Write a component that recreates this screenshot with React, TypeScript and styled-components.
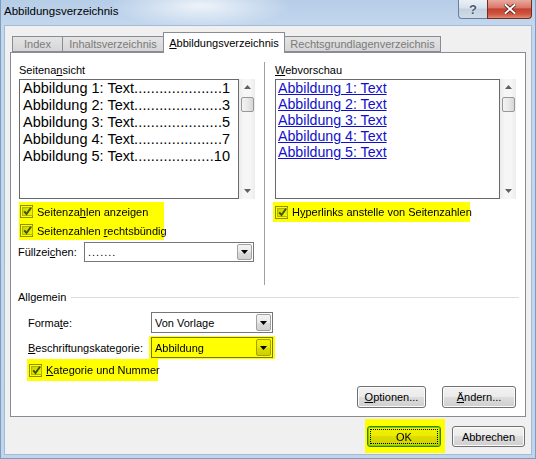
import React from 'react';
import styled, { createGlobalStyle } from 'styled-components';

const GlobalStyle = createGlobalStyle`
  html, body {
    margin: 0;
    padding: 0;
    background: #ffffff;
  }
  body {
    font-family: "Liberation Sans", Arial, sans-serif;
    font-size: 11px;
    color: #000;
  }
`;

const Window = styled.div`
  width: 536px;
  height: 459px;
  box-sizing: border-box;
  display: flex;
  flex-direction: column;
  border: 1px solid #7e9cbd;
  border-top: none;
  background:
    radial-gradient(ellipse 90px 22px at 200px 6px, rgba(255, 255, 255, 0.75), rgba(255, 255, 255, 0) 100%),
    linear-gradient(180deg, #b6cde7 0px, #c3d7ee 25px, #c0d5ec 100%);
`;

const TitleBar = styled.div`
  height: 25px;
  display: flex;
  align-items: flex-start;
`;

const TitleText = styled.div`
  padding: 4px 0 0 3px;
  line-height: 14px;
  font-size: 11.5px;
  color: #000;
`;

const WindowButtons = styled.div`
  margin-left: auto;
  margin-right: 3px;
  display: flex;
`;

const HelpButton = styled.div`
  width: 29px;
  height: 19px;
  box-sizing: border-box;
  border: 1px solid #6b7f99;
  border-top: none;
  border-right: none;
  border-bottom-left-radius: 4px;
  background: linear-gradient(180deg, #eaf0f6 0%, #d7e1ec 45%, #c3d0df 50%, #cfdbe8 100%);
  display: flex;
  align-items: center;
  justify-content: center;
  font-weight: bold;
  font-size: 13px;
  color: #4a5a70;
  text-shadow: 0 0 2px #fff;
`;

const CloseButton = styled.div`
  width: 45px;
  height: 19px;
  box-sizing: border-box;
  border: 1px solid #6f2b24;
  border-top: none;
  border-bottom-right-radius: 4px;
  background: linear-gradient(180deg, #e9aa9e 0%, #d9786b 42%, #c5412f 50%, #cf5440 78%, #e28b72 100%);
  display: flex;
  align-items: center;
  justify-content: center;
`;

const Client = styled.div`
  flex: 1;
  margin: 0 3px 3px;
  border: 1px solid #a5bad3;
  background: #f0f0f0;
  padding: 6px 5px 0;
  display: flex;
  flex-direction: column;
`;

const TabStrip = styled.div`
  display: flex;
  align-items: flex-end;
  height: 20px;
  padding-left: 2px;
`;

const Tab = styled.div<{ $active?: boolean; $w: number }>`
  position: relative;
  width: ${p => p.$w}px;
  height: ${p => (p.$active ? 21 : 16)}px;
  margin-bottom: ${p => (p.$active ? -1 : 0)}px;
  margin-left: -1px;
  &:first-child {
    margin-left: 0;
  }
  box-sizing: border-box;
  border: 1px solid #898c95;
  border-bottom: ${p => (p.$active ? 'none' : '1px solid #898c95')};
  background: ${p => (p.$active ? '#ffffff' : 'linear-gradient(180deg, #e4e4e4 0%, #d6d6d6 100%)')};
  color: ${p => (p.$active ? '#000' : '#7a7a7a')};
  z-index: ${p => (p.$active ? 1 : 0)};
  text-align: center;
  line-height: ${p => (p.$active ? 20 : 15)}px;
  white-space: nowrap;
`;

const Panel = styled.div`
  height: 365px;
  box-sizing: border-box;
  border: 1px solid #898c95;
  background: #ffffff;
  padding: 9px 9px 0 8px;
  display: flex;
  flex-direction: column;
`;

const TopSection = styled.div`
  display: flex;
  height: 223px;
`;

const Column = styled.div<{ $w?: number }>`
  display: flex;
  flex-direction: column;
  align-items: flex-start;
  ${p => (p.$w ? `width: ${p.$w}px;` : 'flex: 1;')}
`;

const Separator = styled.div`
  width: 1px;
  background: #a0a0a0;
  margin: 0 10px 0 9px;
`;

const Label = styled.div`
  line-height: 14px;
  margin-top: 1px;
`;

const ListFrame = styled.div`
  display: flex;
  align-self: stretch;
  height: 120px;
  margin-top: 2px;
`;

const ListArea = styled.div<{ $lh: number; $fs: number; $pad: string }>`
  flex: 1;
  min-width: 0;
  border: 1px solid #6a6a6a;
  background: #fff;
  padding: ${p => p.$pad};
  font-family: "Liberation Sans", Arial, sans-serif;
  font-size: ${p => p.$fs}px;
  line-height: ${p => p.$lh}px;
`;

const EntryRow = styled.div`
  display: flex;
  white-space: nowrap;
`;

const Leader = styled.span`
  flex: 1;
  min-width: 0;
  overflow: hidden;
  white-space: nowrap;
  text-align: right;
  letter-spacing: 0.17px;
`;

const LinkRow = styled.div`
  color: #1010cc;
  text-decoration: underline;
  white-space: nowrap;
`;

const ScrollBar = styled.div`
  width: 16px;
  display: flex;
  flex-direction: column;
  align-items: center;
  background: linear-gradient(90deg, #ebebeb 0%, #f6f6f6 30%, #f6f6f6 70%, #ececec 100%);
`;

const ScrollArrow = styled.div`
  height: 16px;
  display: flex;
  align-items: center;
  justify-content: center;
`;

const ScrollThumb = styled.div`
  width: 13px;
  height: 15px;
  margin-top: 2px;
  box-sizing: border-box;
  border: 1px solid #979797;
  border-radius: 2px;
  background: linear-gradient(90deg, #f3f3f3 0%, #e9e9e9 50%, #d6d6d6 100%);
`;

const ScrollSpacer = styled.div`
  flex: 1;
`;

const Highlight = styled.div<{ $w?: number }>`
  isolation: isolate;
  background: #ffff00;
  ${p => (p.$w ? `width: ${p.$w}px;` : '')}
  box-sizing: border-box;
  & > * {
    mix-blend-mode: multiply;
  }
`;

const CheckRow = styled.div<{ $h: number }>`
  display: flex;
  align-items: center;
  height: ${p => p.$h}px;
  gap: 4px;
  white-space: nowrap;
`;

const CheckBox = styled.span`
  width: 13px;
  height: 13px;
  box-sizing: border-box;
  flex: none;
  border: 1px solid #8e8f8f;
  background: #fff;
  padding: 1px;
  display: flex;
`;

const CheckInner = styled.span`
  flex: 1;
  border: 1px solid #b0b4ba;
  background: linear-gradient(135deg, #ccd0d6 0%, #f5f5f5 100%);
  display: flex;
  align-items: center;
  justify-content: center;
`;

const FillRow = styled.div`
  display: flex;
  align-items: center;
  margin-top: 2px;
  margin-left: -1px;
`;

const InlineLabel = styled.div<{ $w: number }>`
  width: ${p => p.$w}px;
  flex: none;
  white-space: nowrap;
`;

const Combo = styled.div<{ $w: number; $h: number }>`
  display: flex;
  width: ${p => p.$w}px;
  height: ${p => p.$h}px;
  box-sizing: border-box;
  border: 1px solid #767676;
  background: #fff;
`;

const ComboValue = styled.div<{ $spacing?: number }>`
  flex: 1;
  display: flex;
  align-items: center;
  padding-left: 3px;
  white-space: nowrap;
  letter-spacing: ${p => p.$spacing ?? 0}px;
`;

const ComboButton = styled.div`
  width: 15px;
  margin: 1px;
  box-sizing: border-box;
  border: 1px solid #a2a2a2;
  border-radius: 2px;
  background: linear-gradient(180deg, #f4f4f4 0%, #e9e9e9 50%, #dcdcdc 51%, #d0d0d0 100%);
  display: flex;
  align-items: center;
  justify-content: center;
`;

const GroupHeader = styled.div`
  display: flex;
  align-items: center;
  gap: 5px;
  margin-top: 5px;
  margin-left: -1px;
  margin-right: -3px;
  line-height: 14px;
`;

const GroupLine = styled.div`
  flex: 1;
  height: 1px;
  background: #d8dde2;
`;

const FieldRow = styled.div<{ $mt: number }>`
  display: flex;
  align-items: center;
  padding-left: 9px;
  margin-top: ${p => p.$mt}px;
`;

const ComboHighlight = styled(Highlight)`
  padding: 1px 2px;
  margin-left: -2px;
`;

const CategoryHighlight = styled(Highlight)`
  margin-left: 8px;
  padding-left: 2px;
`;

const ButtonRow = styled.div`
  display: flex;
  justify-content: flex-end;
  gap: 16px;
  margin-top: 5px;
`;

const Button = styled.button<{ $w: number; $h: number; $default?: boolean }>`
  width: ${p => p.$w}px;
  height: ${p => p.$h}px;
  box-sizing: border-box;
  padding: 0;
  font: inherit;
  color: #000;
  border: 1px solid ${p => (p.$default ? '#3c7fb1' : '#707070')};
  border-radius: 3px;
  background: linear-gradient(180deg, #f2f2f2 0%, #ebebeb 49%, #dddddd 50%, #cfcfcf 100%);
  box-shadow: inset 0 0 0 1px ${p => (p.$default ? '#6ad4f5' : '#fbfbfb')};
  ${p => (p.$default ? 'outline: 1px dotted #000; outline-offset: -4px;' : '')}
`;

const Footer = styled.div`
  display: flex;
  justify-content: flex-end;
  align-items: flex-start;
  padding: 2px 1px 0 0;
`;

const OkHighlight = styled(Highlight)`
  padding: 7px 4px 6px 2px;
`;

const CancelButton = styled(Button)`
  margin: 7px 0 0 7px;
`;

const Check = () => (
  <CheckBox>
    <CheckInner>
      <svg width="9" height="9" viewBox="0 0 9 9" style={{ overflow: 'visible' }}>
        <path d="M1.2 4.4 L3.5 7 L8 0.8" fill="none" stroke="#3c5598" strokeWidth="1.9" />
      </svg>
    </CheckInner>
  </CheckBox>
);

const DropArrow = () => (
  <svg width="7" height="4" viewBox="0 0 7 4">
    <path d="M0 0 H7 L3.5 4 Z" fill="#000" />
  </svg>
);

const Scroller = () => (
  <ScrollBar>
    <ScrollArrow>
      <svg width="7" height="4" viewBox="0 0 7 4">
        <path d="M0 4 H7 L3.5 0 Z" fill="#606060" />
      </svg>
    </ScrollArrow>
    <ScrollThumb />
    <ScrollSpacer />
    <ScrollArrow>
      <svg width="7" height="4" viewBox="0 0 7 4">
        <path d="M0 0 H7 L3.5 4 Z" fill="#606060" />
      </svg>
    </ScrollArrow>
  </ScrollBar>
);

const entries = [
  { label: 'Abbildung 1: Text', page: '1', dots: 21 },
  { label: 'Abbildung 2: Text', page: '3', dots: 21 },
  { label: 'Abbildung 3: Text', page: '5', dots: 21 },
  { label: 'Abbildung 4: Text', page: '7', dots: 21 },
  { label: 'Abbildung 5: Text', page: '10', dots: 19 },
];

const tabs = [
  { label: 'Index', w: 51 },
  { label: 'Inhaltsverzeichnis', w: 102 },
  { label: 'Abbildungsverzeichnis', w: 122, active: true },
  { label: 'Rechtsgrundlagenverzeichnis', w: 157 },
];

const App: React.FC = () => {
  return (
    <>
      <GlobalStyle />
      <Window>
        <TitleBar>
          <TitleText>Abbildungsverzeichnis</TitleText>
          <WindowButtons>
            <HelpButton>?</HelpButton>
            <CloseButton>
              <svg width="12" height="10" viewBox="0 0 12 10">
                <path d="M1.5 1 L10.5 9 M10.5 1 L1.5 9" stroke="#5a1f18" strokeWidth="3.6" strokeLinecap="square" />
                <path d="M1.5 1 L10.5 9 M10.5 1 L1.5 9" stroke="#ffffff" strokeWidth="2" strokeLinecap="square" />
              </svg>
            </CloseButton>
          </WindowButtons>
        </TitleBar>

        <Client>
          <TabStrip>
            {tabs.map(t => (
              <Tab key={t.label} $w={t.w} $active={t.active}>
                {t.active ? (
                  <>
                    <u>A</u>bbildungsverzeichnis
                  </>
                ) : (
                  t.label
                )}
              </Tab>
            ))}
          </TabStrip>

          <Panel>
            <TopSection>
              <Column $w={236}>
                <Label>
                  Seitena<u>n</u>sicht
                </Label>
                <ListFrame>
                  <ListArea $lh={17} $fs={14.5} $pad="0 8px 0 3px">
                    {entries.map(e => (
                      <EntryRow key={e.label}>
                        <span>{e.label}</span>
                        <Leader>{'.'.repeat(e.dots)}</Leader>
                        <span>{e.page}</span>
                      </EntryRow>
                    ))}
                  </ListArea>
                  <Scroller />
                </ListFrame>
                <Highlight $w={145} style={{ marginTop: 3 }}>
                  <CheckRow $h={19} style={{ paddingLeft: 1 }}>
                    <Check />
                    <span>
                      Seitenza<u>h</u>len anzeigen
                    </span>
                  </CheckRow>
                  <CheckRow $h={19} style={{ paddingLeft: 1 }}>
                    <Check />
                    <span>
                      Seitenzahlen <u>r</u>echtsbündig
                    </span>
                  </CheckRow>
                </Highlight>
                <FillRow>
                  <InlineLabel $w={66}>
                    Füllzei<u>c</u>hen:
                  </InlineLabel>
                  <Combo $w={170} $h={20}>
                    <ComboValue $spacing={1}>.......</ComboValue>
                    <ComboButton>
                      <DropArrow />
                    </ComboButton>
                  </Combo>
                </FillRow>
              </Column>

              <Separator />

              <Column>
                <Label>
                  <u>W</u>ebvorschau
                </Label>
                <ListFrame>
                  <ListArea $lh={16} $fs={14.2} $pad="0 2px">
                    {entries.map(e => (
                      <LinkRow key={e.label}>{e.label}</LinkRow>
                    ))}
                  </ListArea>
                  <Scroller />
                </ListFrame>
                <Highlight $w={197} style={{ marginTop: 3, marginLeft: -2 }}>
                  <CheckRow $h={20} style={{ paddingLeft: 2 }}>
                    <Check />
                    <span>
                      H<u>y</u>perlinks anstelle von Seitenzahlen
                    </span>
                  </CheckRow>
                </Highlight>
              </Column>
            </TopSection>

            <GroupHeader>
              <span>Allgemein</span>
              <GroupLine />
            </GroupHeader>

            <FieldRow $mt={8}>
              <InlineLabel $w={123}>
                Forma<u>t</u>e:
              </InlineLabel>
              <Combo $w={122} $h={21}>
                <ComboValue>Von Vorlage</ComboValue>
                <ComboButton>
                  <DropArrow />
                </ComboButton>
              </Combo>
            </FieldRow>

            <FieldRow $mt={3}>
              <InlineLabel $w={123}>
                <u>B</u>eschriftungskategorie:
              </InlineLabel>
              <ComboHighlight>
                <Combo $w={122} $h={21}>
                  <ComboValue>Abbildung</ComboValue>
                  <ComboButton>
                    <DropArrow />
                  </ComboButton>
                </Combo>
              </ComboHighlight>
            </FieldRow>

            <CategoryHighlight $w={131}>
              <CheckRow $h={22}>
                <Check />
                <span>
                  <u>K</u>ategorie und Nummer
                </span>
              </CheckRow>
            </CategoryHighlight>

            <ButtonRow>
              <Button $w={69} $h={22}>
                <u>O</u>ptionen...
              </Button>
              <Button $w={74} $h={22}>
                <u>Ä</u>ndern...
              </Button>
            </ButtonRow>
          </Panel>

          <Footer>
            <OkHighlight>
              <Button $w={74} $h={21} $default>
                OK
              </Button>
            </OkHighlight>
            <CancelButton $w={73} $h={21}>
              Abbrechen
            </CancelButton>
          </Footer>
        </Client>
      </Window>
    </>
  );
};

export default App;
